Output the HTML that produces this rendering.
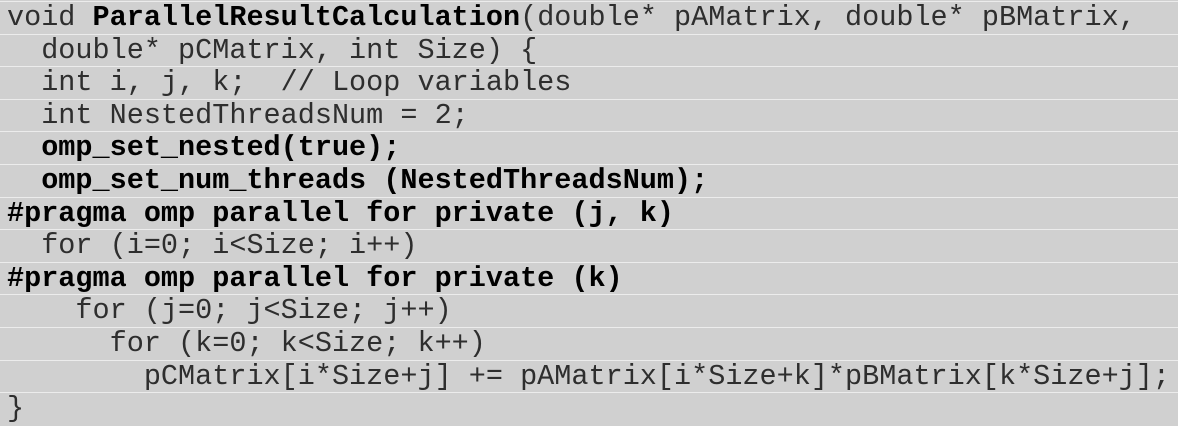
<!DOCTYPE html>
<html><head><style>
html,body{margin:0;padding:0;background:#d0d0d0;width:1178px;height:426px;overflow:hidden}
.c{position:absolute;left:7px;top:2px}
.l{height:31.6px;line-height:32px;border-bottom:1px solid #ececec;font-family:"Liberation Mono",monospace;font-size:28.5px;color:#2e2e2e;white-space:pre;width:1171px;margin-left:-7px;padding-left:7px}
b{font-weight:bold;color:#000}
</style></head><body>
<div style="position:absolute;left:0;top:1px;width:1178px;height:1px;background:#ececec"></div>
<div class="c">
<div class="l">void <b>ParallelResultCalculation</b>(double* pAMatrix, double* pBMatrix,</div>
<div class="l">  double* pCMatrix, int Size) {</div>
<div class="l">  int i, j, k;  // Loop variables</div>
<div class="l">  int NestedThreadsNum = 2;</div>
<div class="l"><b>  omp_set_nested(true);</b></div>
<div class="l"><b>  omp_set_num_threads (NestedThreadsNum);</b></div>
<div class="l"><b>#pragma omp parallel for private (j, k)</b></div>
<div class="l">  for (i=0; i&lt;Size; i++)</div>
<div class="l"><b>#pragma omp parallel for private (k)</b></div>
<div class="l">    for (j=0; j&lt;Size; j++)</div>
<div class="l">      for (k=0; k&lt;Size; k++)</div>
<div class="l">        pCMatrix[i*Size+j] += pAMatrix[i*Size+k]*pBMatrix[k*Size+j];</div>
<div class="l" style="border:none">}</div>
</div>
</body></html>
